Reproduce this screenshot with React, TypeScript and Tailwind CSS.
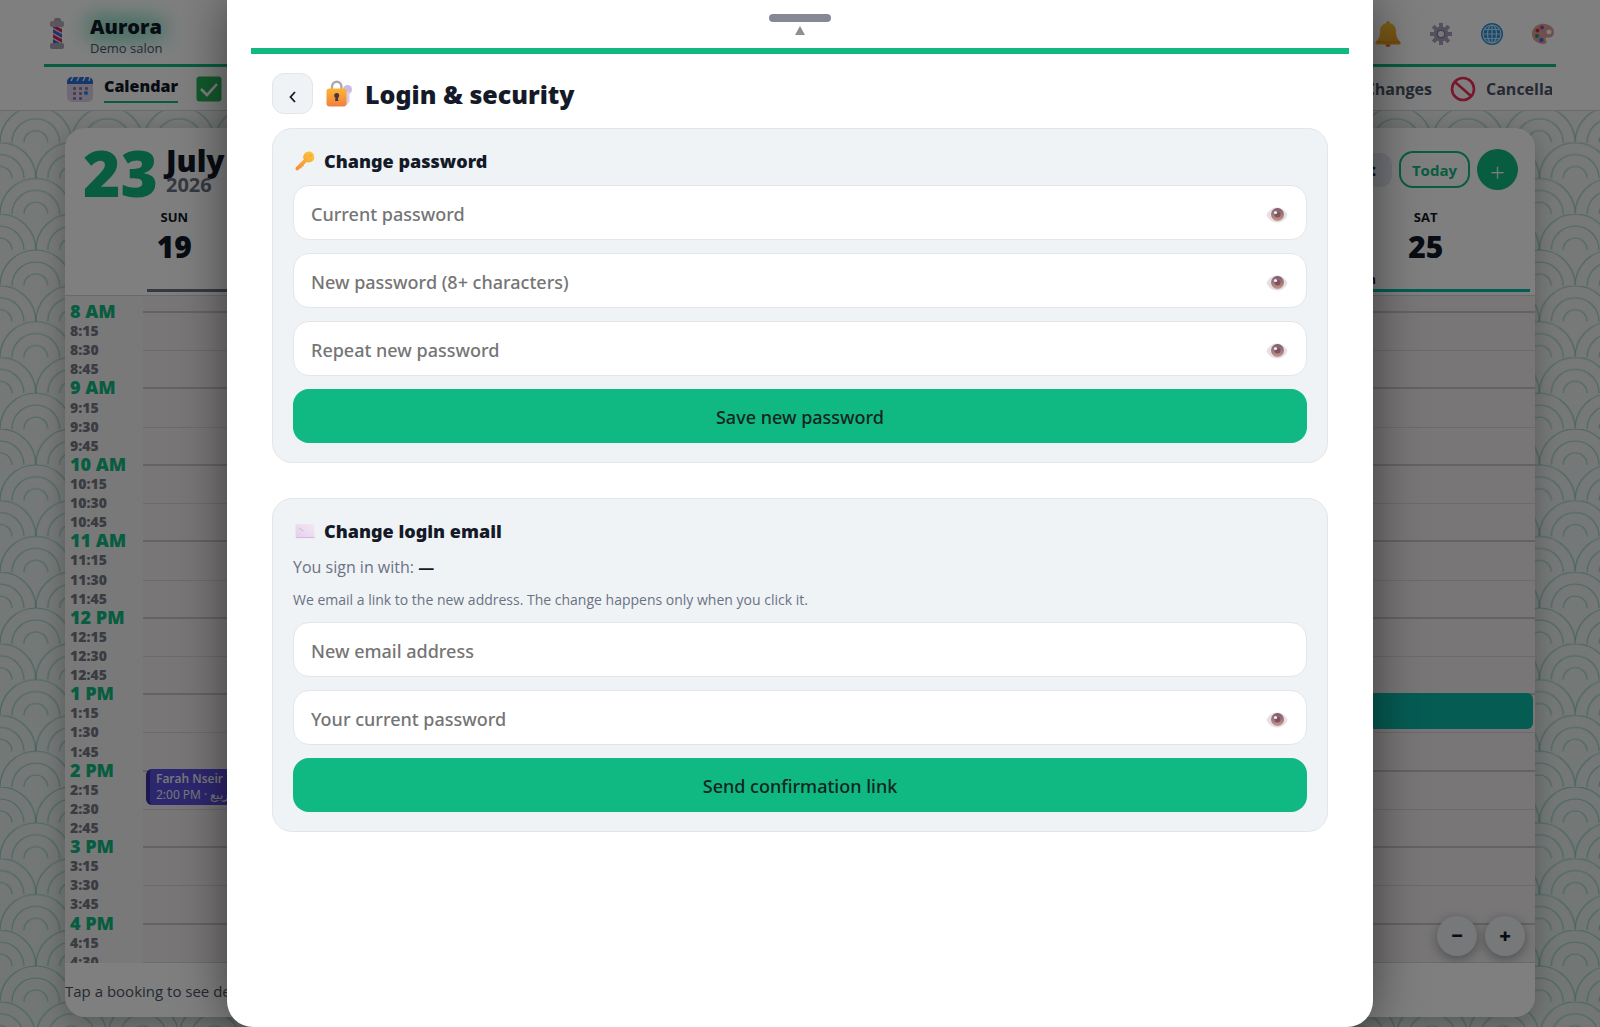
import type { ReactNode } from "react";

const HOURS = ["8 AM", "9 AM", "10 AM", "11 AM", "12 PM", "1 PM", "2 PM", "3 PM", "4 PM"];
const QUARTERS = ["15", "30", "45"];

const DAYS = [
  { name: "SUN", day: 19 },
  { name: "MON", day: 20 },
  { name: "TUE", day: 21 },
  { name: "WED", day: 22 },
  { name: "THU", day: 23 },
  { name: "FRI", day: 24 },
  { name: "SAT", day: 25 },
];

/* ---------- Icons ---------- */

function BarberPole() {
  return (
    <svg viewBox="0 0 16 32" className="h-8 w-4" aria-hidden="true">
      <defs>
        <clipPath id="pole">
          <rect x="4" y="8" width="9" height="17" />
        </clipPath>
      </defs>
      <rect x="4" y="8" width="9" height="17" fill="#e8e4f4" />
      <g clipPath="url(#pole)" strokeWidth="3">
        <path d="M2 7l13 7M2 17l13 7" stroke="#e0244f" />
        <path d="M2 12l13 7M2 22l13 7" stroke="#3a62d8" />
      </g>
      <rect x="5" y="0" width="7" height="4" rx="2" fill="#a9a3b3" />
      <rect x="1" y="3" width="14" height="6" rx="2" fill="#b4aebf" />
      <rect x="1" y="25" width="14" height="6" rx="2" fill="#a9a3b3" />
    </svg>
  );
}

function CalendarIcon() {
  return (
    <svg viewBox="0 0 28 28" className="size-7" aria-hidden="true">
      <rect x="1" y="2" width="26" height="25" rx="5" fill="#dcd3ea" />
      <path d="M1 9V7a5 5 0 0 1 5-5h16a5 5 0 0 1 5 5v2z" fill="#2b6fd6" />
      <path d="M5 6l2-4M11 6l2-4M17 6l2-4M23 6l1-4" stroke="#e8e8ff" strokeWidth="1.5" />
      <g fill="#877b9c">
        <rect x="7" y="12" width="3" height="3" rx="1" />
        <rect x="13" y="12" width="3" height="3" rx="1" />
        <rect x="19" y="12" width="3" height="3" rx="1" />
        <rect x="7" y="17" width="3" height="3" rx="1" />
        <rect x="13" y="17" width="3" height="3" rx="1" />
        <rect x="7" y="22" width="3" height="3" rx="1" />
        <rect x="13" y="22" width="3" height="3" rx="1" />
      </g>
      <rect x="18" y="16" width="4" height="4" rx="2" fill="#2388ee" />
    </svg>
  );
}

function CheckIcon() {
  return (
    <svg viewBox="0 0 26 26" className="size-[26px]" aria-hidden="true">
      <rect x="0.5" y="0.5" width="25" height="25" rx="3" fill="#27b35b" />
      <path d="M5 13l6 6L21 8" fill="none" stroke="#fff" strokeWidth="2.6" />
    </svg>
  );
}

function BanIcon() {
  return (
    <svg viewBox="0 0 26 26" className="size-[26px]" aria-hidden="true">
      <circle cx="13" cy="13" r="11" fill="none" stroke="#ee2f59" strokeWidth="2.6" />
      <path d="M5 6l16 14" stroke="#ee2f59" strokeWidth="2.6" />
    </svg>
  );
}

function BellIcon() {
  return (
    <svg viewBox="0 0 26 26" className="size-[26px]" aria-hidden="true">
      <defs>
        <linearGradient id="bell" x1="0" y1="0" x2="1" y2="1">
          <stop offset="0" stopColor="#ffcb3c" />
          <stop offset="1" stopColor="#e8951f" />
        </linearGradient>
      </defs>
      <circle cx="13" cy="23.5" r="2.5" fill="#e0703a" />
      <circle cx="13" cy="2" r="1.8" fill="#e8a51e" />
      <path d="M13 2c5 0 8 3.5 8 8.5 0 5 1.5 7.500 4.500 11 .5.8.2 2-1 2H1.500c-1.200 0-1.500-1.200-1-2C3.500 18 5 15.500 5 10.500 5 5.500 8 2 13 2z" fill="url(#bell)" />
      <path d="M1.500 20.500c6 1.300 17 1.300 23 0" fill="none" stroke="#d98e1c" />
    </svg>
  );
}

function GearIcon() {
  return (
    <svg viewBox="0 0 22 22" className="size-[22px]" aria-hidden="true">
      <path d="M11 0v22M0 11h22M3.200 3.200l15.600 15.600M18.800 3.200L3.200 18.800" stroke="#aaa0ba" strokeWidth="4" />
      <circle cx="11" cy="11" r="7.500" fill="#aaa0ba" />
      <circle cx="11" cy="11" r="4.500" fill="#8b7f9e" />
      <circle cx="11" cy="11" r="3" fill="#f3eff8" />
    </svg>
  );
}

function GlobeIcon() {
  return (
    <svg viewBox="0 0 22 22" className="size-[22px]" aria-hidden="true">
      <circle cx="11" cy="11" r="11" fill="#2b93dc" />
      <g fill="none" stroke="#c6e6fa" strokeWidth="1.2">
        <circle cx="11" cy="11" r="9" />
        <ellipse cx="11" cy="11" rx="4.5" ry="9" />
        <path d="M11 2v18M2 11h18M3.500 6.500h15M3.500 15.500h15" />
      </g>
    </svg>
  );
}

function PaletteIcon() {
  return (
    <svg viewBox="0 0 22 22" className="size-[22px]" aria-hidden="true">
      <path d="M9 1C16 0 22 4 22 9c0 5-4 6-6.500 5.500-2-.3-2.500 1-1.500 2.500 1.500 2.500 0 4-3 4C4.500 20.500 0 16.500 0 11S4 1.800 9 1z" fill="#e0a09a" />
      <ellipse cx="17" cy="9" rx="2.5" ry="2.2" fill="#fff" />
      <circle cx="10" cy="4.5" r="2" fill="#7b52c8" />
      <circle cx="5.5" cy="7.5" r="2" fill="#d62c3e" />
      <circle cx="5" cy="13" r="2" fill="#2b8f86" />
      <circle cx="9.5" cy="17" r="2.2" fill="#3c74d0" />
    </svg>
  );
}

function LockIcon() {
  return (
    <svg viewBox="0 0 26 27" className="h-[27px] w-[26px]" aria-hidden="true">
      <defs>
        <linearGradient id="lock" x1="0" y1="0" x2="0" y2="1">
          <stop offset="0" stopColor="#fdb62f" />
          <stop offset="1" stopColor="#f27e41" />
        </linearGradient>
      </defs>
      <circle cx="21.5" cy="9.5" r="4.5" fill="#cbbbe0" />
      <path d="M19.500 12h4v9.500l-3 3.500h-1z" fill="#d9cbea" />
      <path d="M6 11V6.500a4.700 4.700 0 0 1 9.400 0V11" fill="none" stroke="#aca8b2" strokeWidth="2.4" />
      <rect x="0.5" y="8.5" width="20" height="18" rx="3" fill="url(#lock)" />
      <circle cx="10.7" cy="15.5" r="2.5" fill="#4b3348" />
      <path d="M9.700 16h2l.6 5h-3.200z" fill="#4b3348" />
    </svg>
  );
}

function KeyIcon() {
  return (
    <svg viewBox="0 0 20 20" className="size-5" aria-hidden="true">
      <defs>
        <linearGradient id="key" x1="1" y1="0" x2="0" y2="1">
          <stop offset="0" stopColor="#fccb37" />
          <stop offset="1" stopColor="#f58a3c" />
        </linearGradient>
      </defs>
      <path
        d="M14 .5a5.500 5.500 0 0 1 2 10.500c-1.500.6-3 .5-4.200 0L9 13.500l-.3 1.800-1.700.2-.4 1.700-1.800.3L3 19.300c-1 .6-2.500-.2-2.500-1.500 0-.7.2-1.200.7-1.700L8.800 8.500A5.500 5.500 0 0 1 14 .5z"
        fill="url(#key)"
      />
      <circle cx="15.5" cy="4.5" r="1.2" fill="#f0a93a" />
    </svg>
  );
}

function MailIcon() {
  return (
    <svg viewBox="0 0 20 16" className="h-4 w-5" aria-hidden="true">
      <defs>
        <linearGradient id="mail" x1="1" y1="0" x2="0" y2="1">
          <stop offset="0" stopColor="#f4e8f2" />
          <stop offset="1" stopColor="#e4cfec" />
        </linearGradient>
      </defs>
      <rect x="0.5" y="1" width="19" height="14" rx="1" fill="url(#mail)" />
      <path d="M4 5l4.500 3" stroke="#c4adc9" strokeWidth="0.8" />
      <path d="M1 14.600h18.500" stroke="#cfa9e6" strokeWidth="0.8" />
    </svg>
  );
}

function EyeIcon() {
  return (
    <svg viewBox="0 0 22 16" className="h-4 w-[22px]" aria-hidden="true">
      <defs>
        <linearGradient id="iris" x1="0" y1="0" x2="0" y2="1">
          <stop offset="0" stopColor="#805a69" />
          <stop offset="1" stopColor="#c69486" />
        </linearGradient>
      </defs>
      <path d="M.5 8C2.500 3 6.500.5 11 .5S19.500 3 21.500 8c-2 5-6 7.500-10.500 7.500S2.500 13 .5 8z" fill="#e3e0e6" />
      <circle cx="11.500" cy="7.500" r="6.500" fill="url(#iris)" />
      <circle cx="11.500" cy="7.500" r="3" fill="#7a5560" />
      <circle cx="9.500" cy="5.500" r="1.600" fill="#f4eef0" />
    </svg>
  );
}

/* ---------- Page behind the sheet ---------- */

function Waves() {
  return (
    <svg className="absolute inset-0 size-full" aria-hidden="true">
      <defs>
        <pattern id="waves" x="0" y="71" width="71.6" height="71.6" patternUnits="userSpaceOnUse">
          <g transform="scale(0.9944)" fill="none" stroke="#4fae98" strokeOpacity="0.5" strokeWidth="1.2">
            <path d="M0 72a36 36 0 0 1 72 0M12 72a24 24 0 0 1 48 0M24 72a12 12 0 0 1 24 0" />
            <path d="M-36 36a36 36 0 0 1 72 0M-24 36a24 24 0 0 1 48 0M-12 36a12 12 0 0 1 24 0" />
            <path d="M36 36a36 36 0 0 1 72 0M48 36a24 24 0 0 1 48 0M60 36a12 12 0 0 1 24 0" />
          </g>
        </pattern>
      </defs>
      <rect width="100%" height="100%" fill="url(#waves)" />
    </svg>
  );
}

function Header() {
  return (
    <header className="relative border-b border-gray-300 bg-white px-11">
      <div className="flex h-[67px] items-center justify-between border-b-[3px] border-[#10b981] pt-1">
        <div className="flex items-center gap-[25px] pl-[5px]">
          <BarberPole />
          <div className="pt-1">
            <div className="text-[20px] leading-6 font-black text-gray-900 [text-shadow:0_0_20px_#10b981,0_0_28px_#10b981]">Aurora</div>
            <div className="text-[13px] leading-[18px] text-gray-600">Demo salon</div>
          </div>
        </div>
        <div className="flex items-center gap-[29px] pr-[2px]">
          <button aria-label="Notifications"><BellIcon /></button>
          <button aria-label="Settings"><GearIcon /></button>
          <button aria-label="Language"><GlobeIcon /></button>
          <button aria-label="Theme"><PaletteIcon /></button>
        </div>
      </div>
      <nav className="flex h-[43px] items-center justify-between pr-1 pl-[22px] text-[16px] leading-[22px] font-bold text-gray-600">
        <div className="flex items-center">
          <a href="#calendar" className="flex items-center gap-[10px] text-gray-900">
            <CalendarIcon />
            <span className="border-b-2 border-[#10b981] pb-1 font-extrabold">Calendar</span>
          </a>
          <a href="#confirmed" className="flex items-center gap-[10px] pl-[18px]">
            <CheckIcon />
            Confirmed
          </a>
        </div>
        <div className="flex items-center gap-[18px]">
          <a href="#changes">Changes</a>
          <a href="#cancellations" className="flex items-center gap-[10px]">
            <BanIcon />
            <span className="w-[66px] overflow-hidden">Cancellations</span>
          </a>
        </div>
      </nav>
    </header>
  );
}

function Schedule() {
  return (
    <div className="relative flex min-h-0 flex-1 overflow-hidden border-t border-gray-300 bg-[#f3f2f4]">
      <div className="w-[78px] shrink-0 pt-[6px] pl-[5px]">
        <div className="grid h-[688px] auto-rows-fr">
          {HOURS.map((hour) => (
            <div key={hour} className="grid grid-rows-4 items-center text-[14px] leading-[19px] font-extrabold text-[#747982]">
              <span className="text-[18px] font-black text-[#10b981]">{hour}</span>
              {QUARTERS.map((q) => (
                <span key={q}>{hour.split(" ")[0]}:{q}</span>
              ))}
            </div>
          ))}
        </div>
      </div>
      <div className="flex-1 bg-[#f0edef] pt-[15px]">
        <div className="relative grid h-[688px] auto-rows-fr">
          {HOURS.map((hour) => (
            <div key={hour} className="grid grid-rows-2 border-t-2 border-[#c9c4c8]">
              <div />
              <div className="border-t border-[#d9d4d8]" />
            </div>
          ))}
          <div className="absolute top-[458px] left-[3px] h-9 w-48 overflow-hidden rounded-md border-l-4 border-[#3a2f9e] bg-[#5b4fe0] pl-[6px] text-[13px] leading-4 whitespace-nowrap text-gray-100">
            <div className="pt-[2px] text-[12px] font-semibold">Farah Nseir</div>
            <div className="text-[12px]">2:00 PM · ربيع</div>
          </div>
          <div className="absolute top-[382px] right-[2px] h-9 w-48 rounded-md bg-[#0bb8a6]" />
        </div>
      </div>
      <div className="absolute right-[10px] bottom-[7px] flex gap-2 text-[20px] leading-none font-black text-gray-900">
        <button className="size-10 rounded-full bg-[#eef0f4] shadow-[0_3px_12px_rgba(0,0,0,0.35)]" aria-label="Zoom out">−</button>
        <button className="size-10 rounded-full bg-[#eef0f4] shadow-[0_3px_12px_rgba(0,0,0,0.35)]" aria-label="Zoom in">+</button>
      </div>
    </div>
  );
}

function CalendarCard() {
  return (
    <main className="relative mx-[65px] mt-[17px] mb-[10px] flex min-h-0 flex-1 flex-col overflow-hidden rounded-[20px] bg-white shadow-[0_6px_24px_rgba(0,0,0,0.25)]">
      <div className="flex h-[76px] items-start justify-between pt-[21px] pr-[17px] pl-[18px]">
        <div className="flex gap-2">
          <span className="text-[64px] leading-[48px] font-black text-[#10b981]">23</span>
          <div>
            <div className="text-[30px] leading-6 font-black text-gray-900">July</div>
            <div className="text-[20px] leading-6 font-bold text-gray-500">2026</div>
          </div>
        </div>
        <div className="flex items-center gap-[7px]">
          <button className="h-[34px] rounded-xl bg-[#e7e8f2] px-4 text-[16px] font-black text-indigo-950">List</button>
          <button className="h-[37px] rounded-[14px] border-2 border-[#10b981] px-[11px] pt-[2px] text-[15px] font-bold text-[#10b981]">Today</button>
          <button className="size-[41px] rounded-full bg-[#10b981] pt-1 text-[26px] leading-none font-light text-white" aria-label="New booking">+</button>
        </div>
      </div>
      <div className="grid grid-cols-7 px-[5px] text-center text-gray-900">
        {DAYS.map((d) => (
          <div key={d.name} className="pt-1">
            <div className="text-[13px] leading-[18px] font-bold">{d.name}</div>
            <div className="text-[30px] leading-[42px] font-black">{d.day}</div>
          </div>
        ))}
      </div>
      <div className="mr-[5px] mb-[3px] ml-[82px] grid h-6 grid-cols-7 content-end text-[12px] leading-[18px] font-bold text-gray-900">
        {DAYS.map((d) => (
          <div
            key={d.name}
            className={d.day === 19 ? "border-b-[3px] border-gray-500" : "border-b-[3px] border-[#0bb8a6]"}
          >
            {d.day === 25 ? "Hassan" : ""}&nbsp;
          </div>
        ))}
      </div>
      <Schedule />
      <p className="h-[54px] shrink-0 pt-4 text-[15px] leading-6 text-gray-600">Tap a booking to see details</p>
    </main>
  );
}

/* ---------- Login & security sheet ---------- */

function Field({ id, label, type = "password" }: { id: string; label: string; type?: string }) {
  return (
    <div className="flex h-[55px] items-center rounded-2xl border border-[#e2e6ea] bg-white pt-[2px] pr-[18px] pl-[17px]">
      <label htmlFor={id} className="sr-only">{label}</label>
      <input
        id={id}
        type={type}
        placeholder={label}
        className="min-w-0 flex-1 bg-transparent font-['Noto_Sans',sans-serif] text-[18px] leading-7 font-medium text-gray-900 outline-none placeholder:text-[#757575]"
      />
      {type === "password" && (
        <button type="button" className="pt-[2px]" aria-label="Show password"><EyeIcon /></button>
      )}
    </div>
  );
}

function Card({ icon, title, action, children }: { icon: ReactNode; title: string; action: string; children: ReactNode }) {
  return (
    <form className="flex flex-col gap-[13px] rounded-[20px] border border-[#e2e6ea] bg-[#eff3f6] px-5 pt-[21px] pb-[19px]">
      <h2 className="flex h-[22px] items-center gap-[9px] pl-[2px] font-['Noto_Sans',sans-serif] text-[18px] leading-6 font-black text-[#151a28]">
        {icon}
        {title}
      </h2>
      {children}
      <button type="button" className="h-[54px] rounded-2xl bg-[#10b981] pt-[2px] font-['Noto_Sans',sans-serif] text-[18px] font-medium text-[#12251f]">
        {action}
      </button>
    </form>
  );
}

function SecuritySheet() {
  return (
    <div className="absolute inset-0 flex justify-center bg-black/50">
      <section className="w-[1146px] max-w-full rounded-b-[26px] bg-white px-6 shadow-[0_0_50px_rgba(0,0,0,0.5)]">
        <div className="flex h-[54px] flex-col items-center border-b-[6px] border-[#10b981] pt-[14px]">
          <div className="h-2 w-[62px] rounded-full bg-[#868896]" />
          <svg viewBox="0 0 10 9" className="mt-1 h-[9px] w-[10px]" aria-hidden="true">
            <path d="M5 0l5 9H0z" fill="#8f8f8f" />
          </svg>
        </div>
        <div className="px-[21px] pt-[19px]">
          <div className="flex h-[41px] items-center gap-[13px]">
            <button className="flex size-[41px] items-center justify-center rounded-xl border border-[#e2e6ea] bg-[#eff3f6]" aria-label="Back">
              <svg viewBox="0 0 8 12" className="mt-[6px] h-3 w-2" aria-hidden="true">
                <path d="M6 1L1.500 6 6 11" fill="none" stroke="#151a28" strokeWidth="1.8" />
              </svg>
            </button>
            <LockIcon />
            <h1 className="font-['Noto_Sans',sans-serif] text-[25px] leading-8 font-black text-[#151a28]">Login &amp; security</h1>
          </div>
          <div className="mt-[14px] flex flex-col gap-[35px]">
            <Card icon={<KeyIcon />} title="Change password" action="Save new password">
              <Field id="current" label="Current password" />
              <Field id="new" label="New password (8+ characters)" />
              <Field id="repeat" label="Repeat new password" />
            </Card>
            <Card icon={<MailIcon />} title="Change login email" action="Send confirmation link">
              <p className="pt-[2px] text-[16px] leading-5 text-gray-500">
                You sign in with: <b className="text-[#151a28]">—</b>
              </p>
              <p className="text-[14px] leading-[19px] text-gray-500">
                We email a link to the new address. The change happens only when you click it.
              </p>
              <Field id="email" label="New email address" type="email" />
              <Field id="confirm" label="Your current password" />
            </Card>
          </div>
        </div>
      </section>
    </div>
  );
}

export default function App() {
  return (
    <div className="relative flex h-screen flex-col overflow-hidden bg-linear-to-b from-[#f2f4f4] to-[#e4eeec] font-['Open_Sans','Noto_Sans',sans-serif]">
      <Waves />
      <Header />
      <CalendarCard />
      <SecuritySheet />
    </div>
  );
}
